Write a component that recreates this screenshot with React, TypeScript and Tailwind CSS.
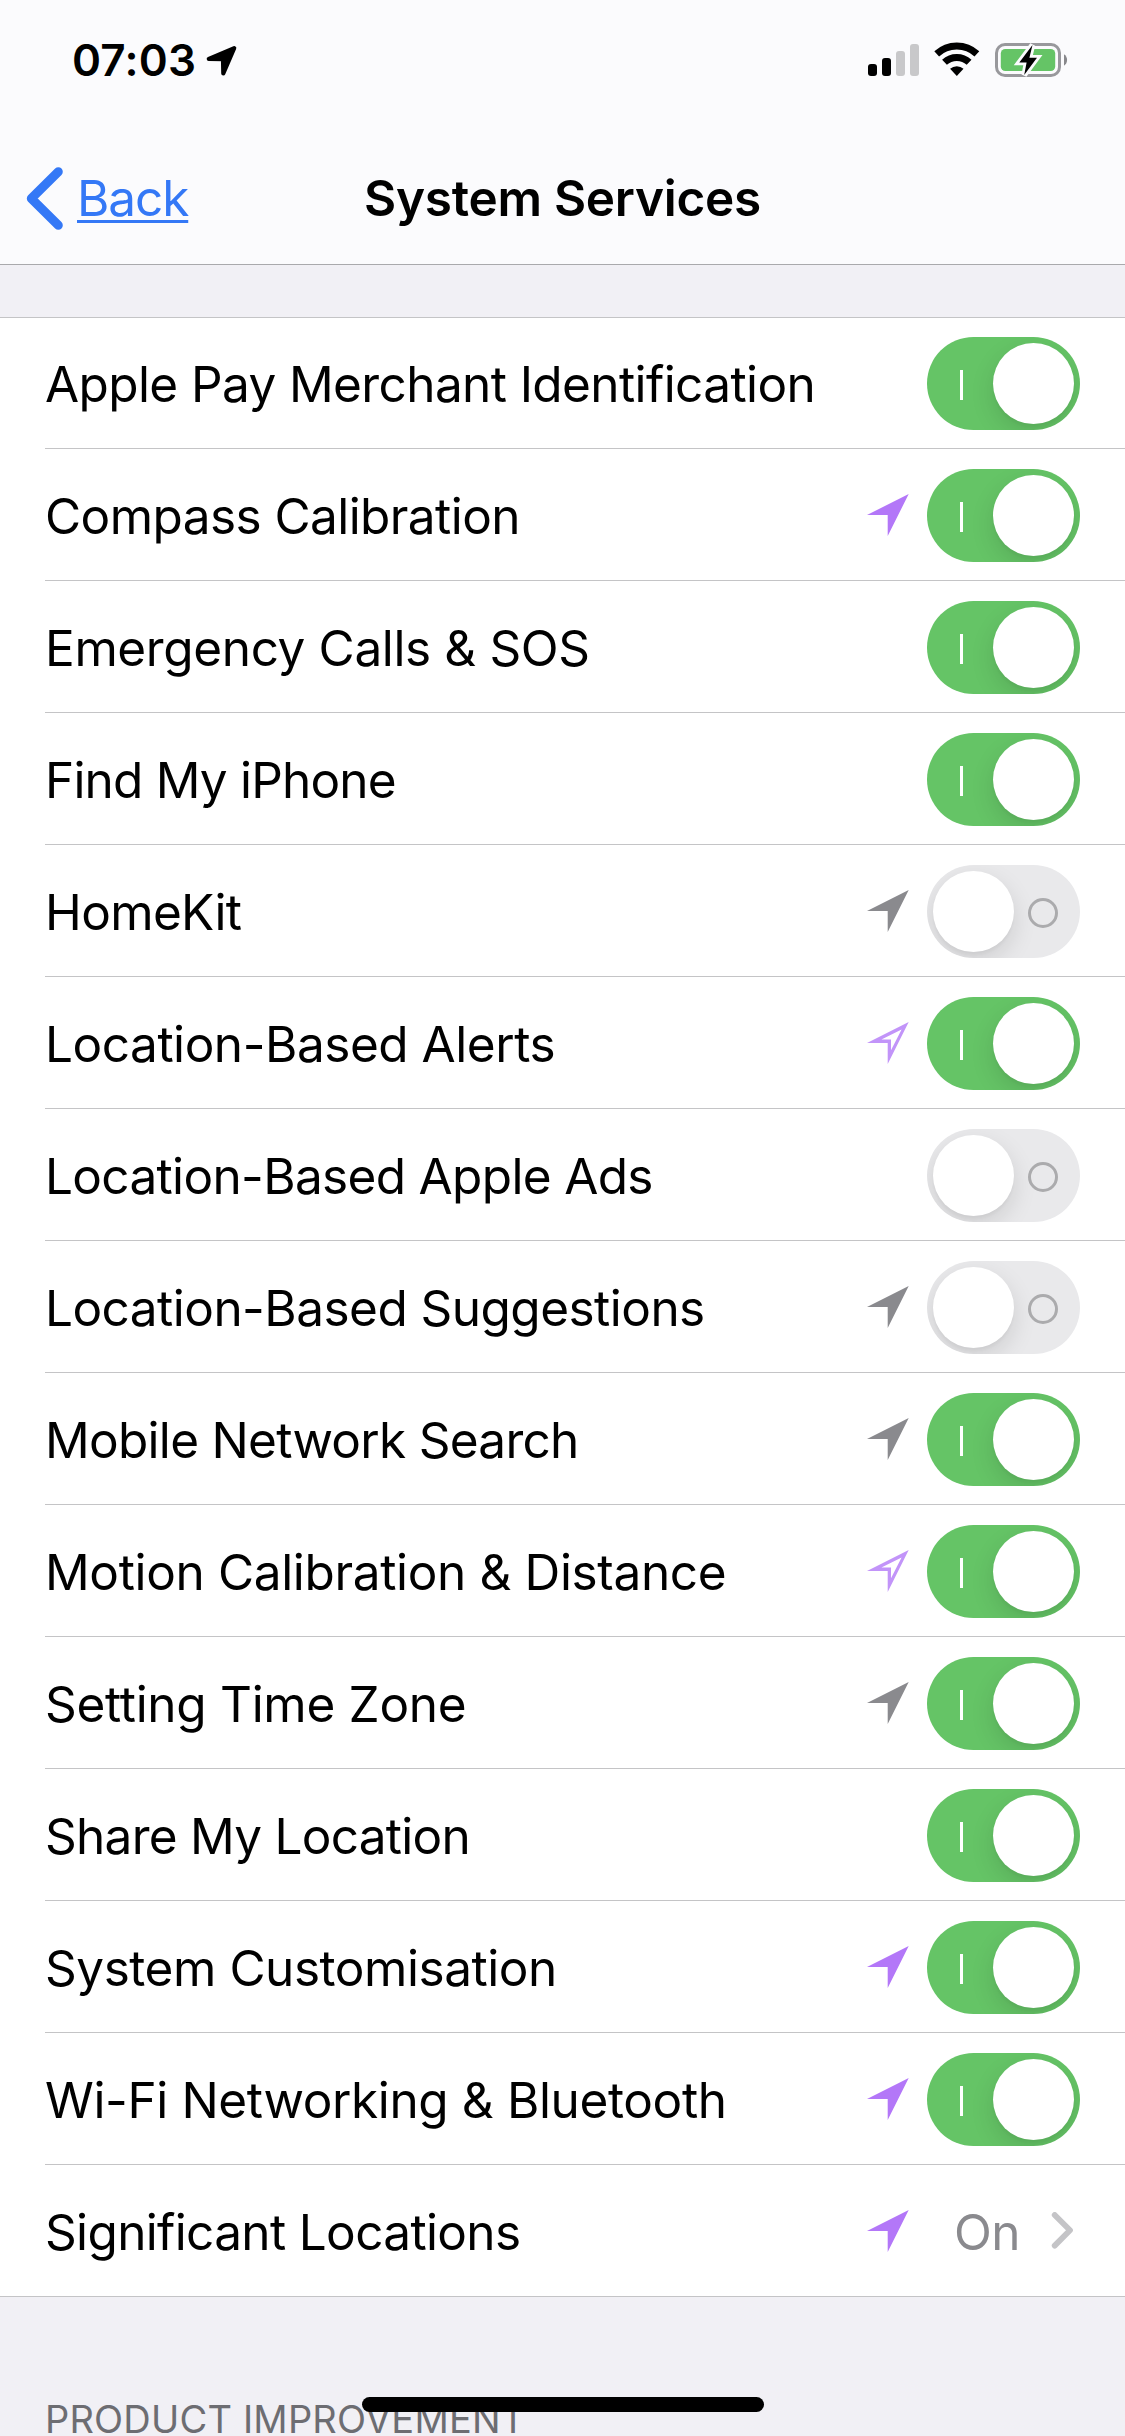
import { clsx } from "clsx";

type Arrow = "purple" | "gray" | "outline";

interface Service {
  label: string;
  tracking: string;
  on: boolean;
  arrow?: Arrow;
}

const services: Service[] = [
  { label: "Apple Pay Merchant Identification", tracking: "tracking-[-0.6px]", on: true },
  { label: "Compass Calibration", tracking: "tracking-[-0.57px]", on: true, arrow: "purple" },
  { label: "Emergency Calls & SOS", tracking: "tracking-[-0.37px]", on: true },
  { label: "Find My iPhone", tracking: "tracking-[-0.8px]", on: true },
  { label: "HomeKit", tracking: "tracking-[-0.65px]", on: false, arrow: "gray" },
  { label: "Location-Based Alerts", tracking: "tracking-[-0.46px]", on: true, arrow: "outline" },
  { label: "Location-Based Apple Ads", tracking: "tracking-[-0.66px]", on: false },
  { label: "Location-Based Suggestions", tracking: "tracking-[-0.53px]", on: false, arrow: "gray" },
  { label: "Mobile Network Search", tracking: "tracking-[-0.71px]", on: true, arrow: "gray" },
  { label: "Motion Calibration & Distance", tracking: "tracking-[-0.35px]", on: true, arrow: "outline" },
  { label: "Setting Time Zone", tracking: "tracking-[-0.29px]", on: true, arrow: "gray" },
  { label: "Share My Location", tracking: "tracking-[-0.73px]", on: true },
  { label: "System Customisation", tracking: "tracking-[-0.45px]", on: true, arrow: "purple" },
  { label: "Wi-Fi Networking & Bluetooth", tracking: "tracking-[-0.37px]", on: true, arrow: "purple" },
];

function LocationArrow({ kind }: { kind: Arrow }) {
  return (
    <svg className="mb-px h-[42px] w-[42px] shrink-0" viewBox="0 0 42 42" aria-hidden="true">
      {kind === "outline" ? (
        <path
          fillRule="evenodd"
          fill="#c294f9"
          d="M41.7 0 L0 21 H20.7 V42 Z M34.6 7.4 L24 28.2 V17.6 H14.4 Z"
        />
      ) : (
        <path fill={kind === "purple" ? "#b377f8" : "#8a8a8e"} d="M41.7 0 L0 21 H20.7 V42 Z" />
      )}
    </svg>
  );
}

function Toggle({ on, label }: { on: boolean; label: string }) {
  return (
    <button
      type="button"
      role="switch"
      aria-checked={on}
      aria-label={label}
      className={clsx(
        "flex h-[93px] w-[153px] shrink-0 items-center overflow-hidden rounded-full px-[6px]",
        on ? "bg-[#65c466]" : "flex-row-reverse bg-[#e9e9eb]",
      )}
    >
      <span className="flex flex-1 items-center pt-[3px]">
        {on ? (
          <span className="ml-[27px] h-[30px] w-[3px] bg-white" />
        ) : (
          <span className="ml-[14px] size-[30px] rounded-full border-[3px] border-[#ababad]" />
        )}
      </span>
      <span className="size-[81px] rounded-full bg-white shadow-[0_9px_24px_rgba(0,0,0,0.12),0_3px_3px_rgba(0,0,0,0.03)]" />
    </button>
  );
}

function StatusBar() {
  return (
    <div className="flex h-[120px] items-center justify-between pr-[56px] pl-[72px]">
      <div className="flex items-center gap-[10px]">
        <span className="text-[44px] leading-none font-semibold tracking-[0.2px]">07:03</span>
        <svg className="h-[31px] w-[31px]" viewBox="0 0 31 31" aria-hidden="true">
          <path
            d="M28.2 3.2 L2.8 13.9 L17 14.2 L17.3 28.4 Z"
            fill="#000"
            stroke="#000"
            strokeWidth="4.2"
            strokeLinejoin="round"
          />
        </svg>
      </div>
      <div className="flex h-[36px] items-center">
        <div className="mr-[15px] flex h-[32px] items-end gap-[5px]">
          <span className="h-[12px] w-[9px] rounded-[3px] bg-black" />
          <span className="h-[18px] w-[9px] rounded-[3px] bg-black" />
          <span className="h-[25px] w-[9px] rounded-[3px] bg-[#c8c8ca]" />
          <span className="h-[32px] w-[9px] rounded-[3px] bg-[#c8c8ca]" />
        </div>
        <svg className="mr-[15px] h-[36px] w-[46px]" viewBox="0 0 46 36" aria-hidden="true">
          <g fill="none" stroke="#000" strokeWidth="7">
            <path d="M2.7 11.9 A29.5 29.5 0 0 1 42.9 11.9" />
            <path d="M10.5 20.3 A18 18 0 0 1 35.1 20.3" />
          </g>
          <path d="M22.8 34 L16.1 26.8 A9.8 9.8 0 0 1 29.5 26.8 Z" />
        </svg>
        <svg className="h-[36px] w-[74px]" viewBox="0 0 74 36" aria-hidden="true">
          <rect x="1.5" y="2.5" width="63" height="31" rx="8.5" fill="none" stroke="#98989c" strokeWidth="3" />
          <rect x="5.8" y="7" width="54.4" height="22" rx="4.5" fill="#65c466" />
          <path d="M69 12.3 A6.8 6.8 0 0 1 69 23.7 Z" fill="#88888c" />
          <path
            d="M37.5 3 L24.3 20.4 H31.6 L29.2 33 L42 15.8 H34.4 Z"
            fill="#000"
            stroke="#fbfbfd"
            strokeWidth="5.5"
            paintOrder="stroke"
          />
        </svg>
      </div>
    </div>
  );
}

function NavBar() {
  return (
    <nav className="grid h-[144px] grid-cols-[1fr_auto_1fr] items-center pt-[12px] text-[49.5px] leading-[60px]">
      <a className="flex items-center pl-[26px] text-[#3478f6]" href="#back">
        <svg className="mr-[13px] h-[64px] w-[38px]" viewBox="0 0 38 64" aria-hidden="true">
          <path
            d="M32.3 5.7 L5.3 32.5 L32.3 59.3"
            fill="none"
            stroke="#3478f6"
            strokeWidth="9"
            strokeLinecap="round"
            strokeLinejoin="round"
          />
        </svg>
        <span className="tracking-[-1.1px] underline decoration-[3px] underline-offset-[4px]">Back</span>
      </a>
      <h1 className="font-semibold tracking-[-0.27px]">System Services</h1>
    </nav>
  );
}

export default function App() {
  return (
    <div className="relative h-[2436px] w-[1125px] overflow-hidden bg-[#f1f0f5] font-[Inter,'Liberation_Sans',sans-serif] text-black">
      <header className="border-b border-[#a9a9ac] bg-[#fbfbfd]">
        <StatusBar />
        <NavBar />
      </header>

      <ul className="mt-[52px] bg-white text-[49.5px] leading-[60px] shadow-[inset_0_1px_0_#c4c4c6]">
        {services.map((s) => (
          <li key={s.label} className="pl-[45px]">
            <div className="flex h-[132px] items-center border-b border-[#c4c4c6] pt-[2px] pr-[45px]">
              <span className={clsx("flex-1 whitespace-nowrap", s.tracking)}>{s.label}</span>
              <span className="flex items-center gap-[18px]">
                {s.arrow && <LocationArrow kind={s.arrow} />}
                <Toggle on={s.on} label={s.label} />
              </span>
            </div>
          </li>
        ))}
        <li className="flex h-[132px] items-center border-b border-[#c4c4c6] pt-[2px] pr-[51px] pl-[45px]">
          <span className="flex-1 tracking-[-0.65px]">Significant Locations</span>
          <LocationArrow kind="purple" />
          <span className="ml-[45px] w-[97px] tracking-[-0.6px] text-[#8a8a8e]">On</span>
          <svg className="mb-[3px] h-[37px] w-[23px]" viewBox="0 0 23 37" aria-hidden="true">
            <path
              d="M3.7 3 L19 18.3 L3.7 33.6"
              fill="none"
              stroke="#c4c4c7"
              strokeWidth="5.8"
              strokeLinecap="round"
              strokeLinejoin="round"
            />
          </svg>
        </li>
      </ul>

      <h2 className="pt-[103px] pl-[45px] text-[38px] leading-[38px] tracking-[0.19px] text-[#6d6d72]">
        PRODUCT IMPROVEMENT
      </h2>

      <div className="absolute bottom-[24px] left-1/2 h-[15px] w-[402px] -translate-x-1/2 rounded-full bg-black" />
    </div>
  );
}
